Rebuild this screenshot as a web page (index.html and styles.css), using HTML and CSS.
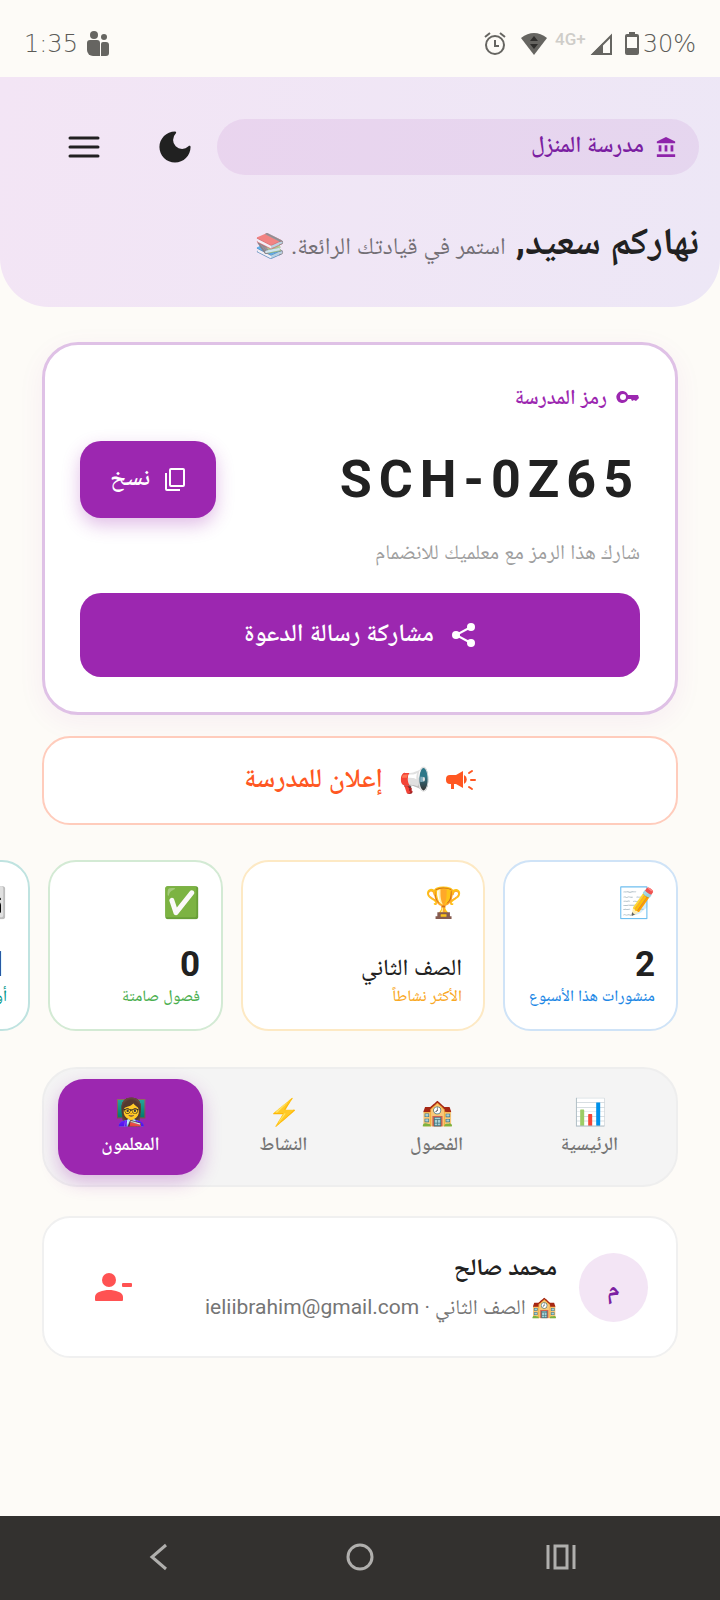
FILE: index.html
```
<!DOCTYPE html>
<html lang="ar" dir="rtl">
<head>
    <meta charset="UTF-8">
    <meta name="viewport" content="width=device-width, initial-scale=1.0">
    <title>مدرسة المنزل</title>
    <link rel="stylesheet" href="styles.css">
</head>
<body>
    <div class="status-bar" dir="ltr">
        <span class="status-time">1:35</span>
        <svg class="status-people" width="24" height="28" viewBox="0 0 24 28" fill="#666561">
            <circle cx="8" cy="5" r="4"/>
            <circle cx="18" cy="7" r="3"/>
            <path d="M4 10h7a3 3 0 0 1 3 3v13H7a6 6 0 0 1-6-6v-7a3 3 0 0 1 3-3z"/>
            <path d="M17 12h3a3 3 0 0 1 3 3v8a3 3 0 0 1-3 3h-5V14a2 2 0 0 1 2-2z"/>
        </svg>
        <div class="status-icons">
            <svg width="24" height="24" viewBox="0 0 24 24" fill="none" stroke="#666561" stroke-width="2">
                <circle cx="12" cy="13" r="9"/>
                <path d="M12 8v6h4M2 5l5-4M22 5l-5-4"/>
            </svg>
            <svg class="wifi" width="26" height="22" viewBox="0 0 26 22">
                <path fill="#666561" d="M0 5Q13-5 26 5L13 22z"/>
                <path fill="#2f2e2c" d="M13 3l4 5H9zM13 16l4-5H9z"/>
            </svg>
            <span class="network">4G+</span>
            <svg width="22" height="22" viewBox="0 0 22 22">
                <path fill="none" stroke="#666561" stroke-width="2" d="M3 21L21 3v18z"/>
                <path fill="#666561" d="M1 22L13 10v12z"/>
            </svg>
            <svg class="battery" width="14" height="24" viewBox="0 0 14 24">
                <path fill="#666561" fill-rule="evenodd" d="M4 0h6v2h2a2 2 0 0 1 2 2v17a2 2 0 0 1-2 2H2a2 2 0 0 1-2-2V4a2 2 0 0 1 2-2h2zM2 5v11h10V5z"/>
            </svg>
            <span class="status-time">30%</span>
        </div>
    </div>

    <header class="header">
        <div class="header-top">
            <div class="school-pill">
                <svg width="22" height="22" viewBox="0 0 24 24" fill="#8e24aa">
                    <path d="M12 1L2 6v2h20V6zM2 20h20v3H2zM4 10h3v7H4zM10.500 10h3v7h-3zM17 10h3v7h-3z"/>
                </svg>
                <span>مدرسة المنزل</span>
            </div>
            <button class="icon-btn" aria-label="الوضع الليلي">
                <svg width="34" height="34" viewBox="0 0 24 24" fill="#212121">
                    <path d="M12 1C6 1 1 6 1 12s5 11 11 11 11-5 11-11c0-1-1-1-1.500-.500A6 6 0 0 1 12.500 2.500C13 2 13 1 12 1z"/>
                </svg>
            </button>
            <button class="icon-btn" aria-label="القائمة">
                <svg width="32" height="24" viewBox="0 0 32 24" stroke="#212121" stroke-width="3" stroke-linecap="round">
                    <path d="M2 3h28M2 12h28M2 21h28"/>
                </svg>
            </button>
        </div>
        <div class="greeting">
            <h1>نهاركم سعيد,</h1>
            <p>استمر في قيادتك الرائعة. 📚</p>
        </div>
    </header>

    <main class="content">
        <section class="code-card">
            <div class="code-label">
                <svg width="24" height="14" viewBox="0 0 24 14" fill="#9c27b0">
                    <path fill-rule="evenodd" d="M7 1a6 6 0 1 0 5 8h3l1 2 2-1 2 1 3-3-1-3H12A6 6 0 0 0 7 1zm0 3a3 3 0 1 1 0 6 3 3 0 0 1 0-6z"/>
                </svg>
                <span>رمز المدرسة</span>
            </div>
            <div class="code-row">
                <span class="code" dir="ltr">SCH-0Z65</span>
                <button class="copy-btn">
                    <svg width="22" height="26" viewBox="0 0 22 26" fill="none" stroke="#fff" stroke-width="2">
                        <rect x="6" y="2" width="14" height="17" rx="1"/>
                        <path d="M2 6v16a1 1 0 0 0 1 1h13"/>
                    </svg>
                    <span>نسخ</span>
                </button>
            </div>
            <p class="code-hint">شارك هذا الرمز مع معلميك للانضمام</p>
            <button class="share-btn">
                <svg width="24" height="24" viewBox="0 0 24 24" fill="#fff">
                    <circle cx="19" cy="4" r="4"/>
                    <circle cx="4" cy="12" r="4"/>
                    <circle cx="19" cy="20" r="4"/>
                    <path fill="none" stroke="#fff" stroke-width="2" d="M19 4L4 12l15 8"/>
                </svg>
                <span>مشاركة رسالة الدعوة</span>
            </button>
        </section>

        <button class="announce-btn">
            <svg width="30" height="24" viewBox="0 0 30 24" fill="#ff5722">
                <path d="M17 2v17l-7-4H8v5H5v-5H4a4 4 0 0 1-4-4v-1a4 4 0 0 1 4-4h6zM18 6a5 5 0 0 1 0 9z"/>
                <path stroke="#ff5722" stroke-width="2" stroke-linecap="round" d="M23 4l3-2M25 11h4M23 18l3 2"/>
            </svg>
            <span class="announce-icon">📢</span>
            <span>إعلان للمدرسة</span>
        </button>

        <div class="stats">
            <div class="stat stat-blue">
                <span class="stat-icon">📝</span>
                <strong>2</strong>
                <span class="stat-label">منشورات هذا الأسبوع</span>
            </div>
            <div class="stat stat-amber">
                <span class="stat-icon">🏆</span>
                <strong class="stat-name">الصف الثاني</strong>
                <span class="stat-label">الأكثر نشاطاً</span>
            </div>
            <div class="stat stat-green">
                <span class="stat-icon">✅</span>
                <strong>0</strong>
                <span class="stat-label">فصول صامتة</span>
            </div>
            <div class="stat stat-teal">
                <span class="stat-icon">👨‍👩‍👧</span>
                <strong>1</strong>
                <span class="stat-label">أولياء الأمور</span>
            </div>
        </div>

        <nav class="tabs">
            <button class="tab"><span class="tab-icon">📊</span>الرئيسية</button>
            <button class="tab"><span class="tab-icon">🏫</span>الفصول</button>
            <button class="tab"><span class="tab-icon">⚡</span>النشاط</button>
            <button class="tab active"><span class="tab-icon">👩‍🏫</span>المعلمون</button>
        </nav>

        <section class="teacher">
            <span class="avatar">م</span>
            <div class="teacher-info">
                <h2>محمد صالح</h2>
                <p>🏫 الصف الثاني · ieliibrahim@gmail.com</p>
            </div>
            <button class="remove-btn" aria-label="إزالة المعلم">
                <svg width="38" height="30" viewBox="0 0 38 30" fill="#ff5252">
                    <circle cx="14" cy="8" r="7"/>
                    <path d="M0 28v-3c0-5 8-7 14-7s14 2 14 7v3a1 1 0 0 1-1 1H1a1 1 0 0 1-1-1z"/>
                    <rect x="27" y="11" width="10" height="4" rx="1"/>
                </svg>
            </button>
        </section>
    </main>

    <div class="system-nav" dir="ltr">
        <button aria-label="رجوع">
            <svg width="30" height="30" viewBox="0 0 30 30" fill="none" stroke="#b0afad" stroke-width="3">
                <path d="M22 3L8 15l14 12"/>
            </svg>
        </button>
        <button aria-label="الشاشة الرئيسية">
            <svg width="30" height="30" viewBox="0 0 30 30" fill="none" stroke="#b0afad" stroke-width="3">
                <circle cx="15" cy="15" r="12"/>
            </svg>
        </button>
        <button aria-label="التطبيقات الأخيرة">
            <svg width="30" height="30" viewBox="0 0 30 30" fill="none" stroke="#b0afad" stroke-width="3">
                <path d="M2 3v24M28 3v24M9 4h12v22H9z"/>
            </svg>
        </button>
    </div>
</body>
</html>
```
FILE: styles.css
```
* {
    box-sizing: border-box;
}

body {
    margin: 0;
    min-height: 100vh;
    display: flex;
    flex-direction: column;
    background-color: #fdfbf7;
    color: #212121;
    font-family: Roboto, "Noto Naskh Arabic", "Noto Sans Arabic", serif;
    overflow-x: hidden;
}

h1, h2, p {
    margin: 0;
}

button {
    border: none;
    padding: 0;
    background: none;
    color: inherit;
    font-family: inherit;
    cursor: pointer;
}

svg {
    flex-shrink: 0;
}

/* status bar */
.status-bar {
    display: flex;
    align-items: center;
    height: 77px;
    padding: 10px 24px 0;
    color: #5c5b57;
}

.status-time {
    font-family: "DejaVu Sans", sans-serif;
    font-size: 24px;
    font-weight: 200;
}

.status-people {
    margin-left: 8px;
}

.status-icons {
    display: flex;
    align-items: center;
    margin-left: auto;
}

.wifi {
    margin: 0 8px 0 14px;
}

.network {
    margin: 0 4px 10px 0;
    color: #cfcdc9;
    font-size: 17px;
    font-weight: 500;
}

.battery {
    margin: 0 4px 0 13px;
}

/* header */
.header {
    padding: 42px 21px 37px;
    border-radius: 0 0 49px 49px;
    background: linear-gradient(100deg, #f3e5f5, #ede7f6);
}

.header-top {
    display: flex;
    align-items: center;
    padding-left: 14px;
}

.school-pill {
    flex: 1;
    display: flex;
    align-items: center;
    gap: 11px;
    height: 56px;
    padding: 0 22px;
    border-radius: 28px;
    background-color: rgba(156, 39, 176, 0.09);
    color: #7b1fa2;
    font-size: 23px;
    font-weight: 600;
}

.icon-btn {
    display: flex;
    align-items: center;
    justify-content: center;
    width: 84px;
    height: 56px;
}

.icon-btn + .icon-btn {
    width: 98px;
}

.greeting {
    display: flex;
    align-items: baseline;
    gap: 10px;
    margin-top: 42px;
    line-height: 48px;
}

.greeting h1 {
    font-size: 38px;
    font-weight: 700;
}

.greeting p {
    font-size: 24px;
    opacity: 0.6;
}

/* content */
.content {
    flex: 1;
    padding: 35px 42px;
}

.code-card {
    padding: 35px;
    border: 3px solid #dfc1e6;
    border-radius: 36px;
    background-color: #fff;
    box-shadow: 0 7px 28px rgba(156, 39, 176, 0.06);
}

.code-label {
    display: flex;
    align-items: center;
    gap: 9px;
    color: #9c27b0;
    font-size: 21px;
    font-weight: 600;
    line-height: 34px;
}

.code-row {
    display: flex;
    align-items: center;
    justify-content: space-between;
    margin-top: 27px;
}

.code {
    font-size: 52px;
    font-weight: 700;
    letter-spacing: 7px;
}

.copy-btn {
    display: flex;
    align-items: center;
    gap: 14px;
    height: 77px;
    padding: 0 30px;
    border-radius: 21px;
    background-color: #9c27b0;
    box-shadow: 0 7px 18px rgba(156, 39, 176, 0.3);
    color: #fff;
    font-size: 24px;
    font-weight: 600;
}

.code-hint {
    margin: 17px 0 24px;
    color: #9e9e9e;
    font-size: 21px;
    line-height: 34px;
}

.share-btn {
    display: flex;
    align-items: center;
    justify-content: center;
    gap: 18px;
    width: 100%;
    height: 84px;
    border-radius: 21px;
    background-color: #9c27b0;
    color: #fff;
    font-size: 25px;
    font-weight: 600;
}

.announce-btn {
    display: flex;
    align-items: center;
    justify-content: center;
    gap: 16px;
    width: 100%;
    height: 89px;
    margin-top: 21px;
    border: 2px solid #ffccbc;
    border-radius: 28px;
    background-color: #fff;
    color: #ff5722;
    font-size: 27px;
    font-weight: 600;
}

.announce-icon {
    font-size: 25px;
}

/* stats */
.stats {
    display: flex;
    gap: 18px;
    margin: 35px -42px 0 -42px;
    padding: 0 42px;
    overflow: hidden;
}

.stat {
    flex: none;
    display: flex;
    flex-direction: column;
    width: 175px;
    height: 171px;
    padding: 20px 21px;
    border: 2px solid;
    border-radius: 28px;
    background-color: #fff;
}

.stat-icon {
    height: 42px;
    font-size: 30px;
    line-height: 42px;
}

.stat strong {
    height: 40px;
    margin-top: 20px;
    font-size: 35px;
    font-weight: 700;
    line-height: 42px;
}

.stat .stat-name {
    font-size: 23px;
    font-weight: 500;
    line-height: 48px;
}

.stat-label {
    font-size: 16px;
    font-weight: 500;
    line-height: 24px;
    white-space: nowrap;
}

.stat-blue {
    border-color: #cfe3f7;
}

.stat-blue .stat-label {
    color: #1e88e5;
}

.stat-amber {
    width: 244px;
    border-color: #fde9c4;
}

.stat-amber .stat-label {
    color: #f9a825;
}

.stat-green {
    border-color: #d3ead4;
}

.stat-green .stat-label {
    color: #4caf50;
}

.stat-teal {
    border-color: #bfe3e0;
}

.stat-teal .stat-label {
    color: #009688;
}

/* tabs */
.tabs {
    display: flex;
    margin-top: 36px;
    padding: 10px;
    border: 2px solid #eeeeee;
    border-radius: 35px;
    background-color: #f4f4f4;
}

.tab {
    flex: 1;
    display: flex;
    flex-direction: column;
    align-items: center;
    justify-content: center;
    height: 96px;
    margin: 0 4px;
    border-radius: 26px;
    color: #757575;
    font-size: 19px;
    font-weight: 600;
    line-height: 30px;
}

.tab-icon {
    font-size: 26px;
    line-height: 34px;
}

.tab.active {
    background-color: #9c27b0;
    box-shadow: 0 7px 18px rgba(156, 39, 176, 0.3);
    color: #fff;
}

/* teacher */
.teacher {
    display: flex;
    align-items: center;
    margin-top: 29px;
    padding: 28px;
    height: 142px;
    border: 2px solid #f0f0f0;
    border-radius: 28px;
    background-color: #fff;
}

.avatar {
    width: 69px;
    height: 69px;
    border-radius: 50%;
    background-color: #f3e5f5;
    color: #7b1fa2;
    font-size: 25px;
    font-weight: 700;
    line-height: 69px;
    text-align: center;
}

.teacher-info {
    flex: 1;
    margin-right: 22px;
}

.teacher-info h2 {
    font-size: 24px;
    font-weight: 700;
    line-height: 40px;
}

.teacher-info p {
    color: #757575;
    font-size: 21px;
    line-height: 40px;
}

.remove-btn {
    display: flex;
    align-items: center;
    justify-content: center;
    width: 84px;
    height: 84px;
}

/* system navigation */
.system-nav {
    display: flex;
    align-items: center;
    justify-content: space-between;
    height: 84px;
    padding: 0 144px;
    background-color: #33312f;
}
```
